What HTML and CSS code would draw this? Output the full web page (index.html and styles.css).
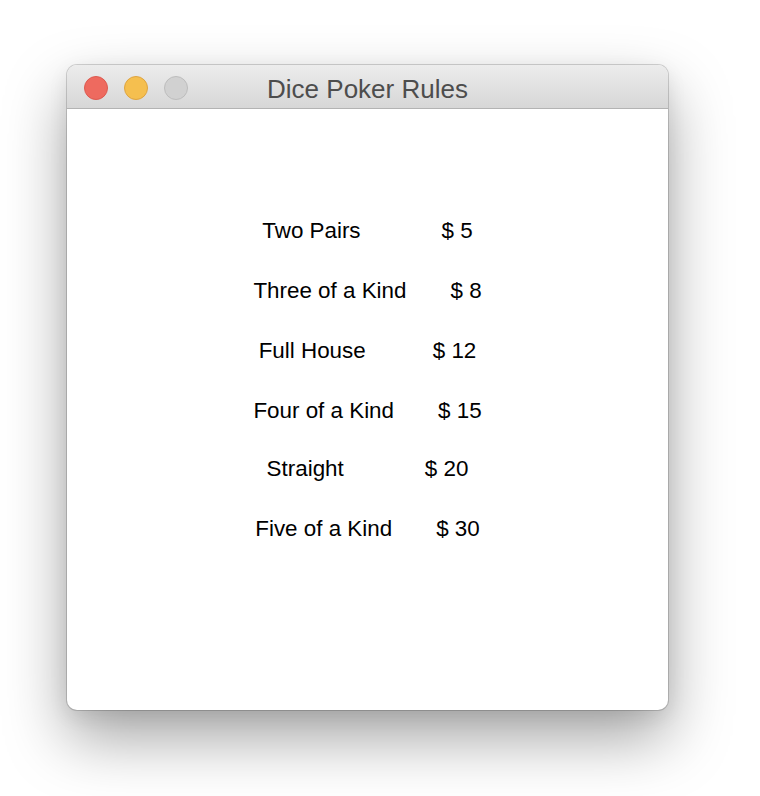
FILE: index.html
```html
<!DOCTYPE html>
<html lang="en">
<head>
<meta charset="utf-8">
<title>Dice Poker Rules</title>
<link rel="stylesheet" href="styles.css">
</head>
<body>
  <div class="window">
    <div class="titlebar">
      <div class="lights">
        <span class="light light-close"></span>
        <span class="light light-min"></span>
        <span class="light light-max"></span>
      </div>
      <div class="title">Dice Poker Rules</div>
      <div></div>
    </div>
    <div class="content">
      <div class="row gap-wide"><span class="label">Two Pairs</span><span class="price">$ 5</span></div>
      <div class="row gap-narrow"><span class="label">Three of a Kind</span><span class="price">$ 8</span></div>
      <div class="row gap-mid"><span class="label">Full House</span><span class="price">$ 12</span></div>
      <div class="row gap-narrow"><span class="label">Four of a Kind</span><span class="price">$ 15</span></div>
      <div class="row gap-wide row-tight"><span class="label">Straight</span><span class="price">$ 20</span></div>
      <div class="row gap-narrow"><span class="label">Five of a Kind</span><span class="price">$ 30</span></div>
    </div>
  </div>
</body>
</html>
```

FILE: styles.css
```css
html, body {
  margin: 0;
  padding: 0;
  background: #ffffff;
}

body {
  box-sizing: border-box;
  min-height: 796px;
  padding: 65px 0 0 67px;
  font-family: "Liberation Sans", Arial, sans-serif;
}

.window {
  width: 601px;
  height: 645px;
  border-radius: 10px;
  background: #ffffff;
  overflow: hidden;
  box-shadow: 0 0 0 1px rgba(0, 0, 0, 0.16), 0 28px 62px rgba(0, 0, 0, 0.36), 0 6px 20px rgba(0, 0, 0, 0.08);
  display: flex;
  flex-direction: column;
}

.titlebar {
  box-sizing: border-box;
  height: 44px;
  flex: none;
  background: linear-gradient(#ececec, #d7d7d7);
  border-bottom: 1px solid #b3b3b3;
  display: grid;
  grid-template-columns: 1fr auto 1fr;
  align-items: start;
}

.lights {
  display: flex;
  gap: 16px;
  margin: 11px 0 0 17px;
}

.light {
  box-sizing: border-box;
  width: 24px;
  height: 24px;
  border-radius: 50%;
}

.light-close {
  background: #ee6a5f;
  border: 1px solid #dd5a50;
}

.light-min {
  background: #f5bf4f;
  border: 1px solid #dea441;
}

.light-max {
  background: #d1d1d1;
  border: 1px solid #bdbdbd;
}

.title {
  margin-top: 5px;
  font-size: 26px;
  line-height: 39px;
  color: #4d4d4d;
  white-space: nowrap;
}

.content {
  flex: 1;
  display: flex;
  flex-direction: column;
  align-items: center;
  padding-top: 110px;
  gap: 36px;
}

.row {
  display: flex;
  font-size: 22.4px;
  line-height: 24px;
  color: #000000;
  white-space: nowrap;
}

.gap-wide { gap: 81px; }
.gap-mid { gap: 67px; }
.gap-narrow { gap: 44px; }

.row-tight { margin-top: -2px; }
```
